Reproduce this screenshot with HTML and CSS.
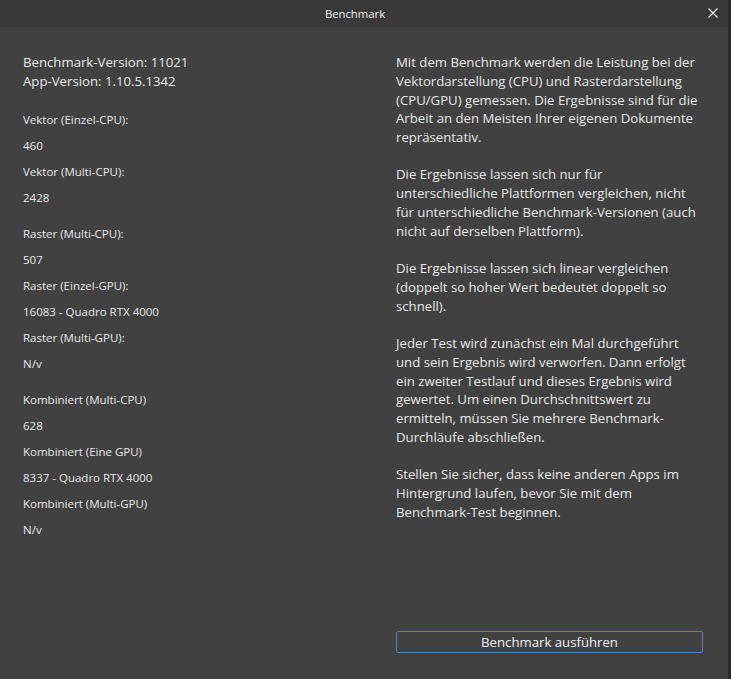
FILE: index.html
```html
<!DOCTYPE html>
<html lang="de">
<head>
<meta charset="utf-8">
<title>Benchmark</title>
<link rel="stylesheet" href="styles.css">
</head>
<body>
<div class="window">
  <header class="titlebar">
    <span class="title">Benchmark</span>
    <span class="close" aria-label="Schließen">
      <svg width="10" height="10" viewBox="0 0 10 10"><path d="M0.5 0.5 L9.5 9.5 M9.5 0.5 L0.5 9.5" stroke="#e6e6e6" stroke-width="1.2" fill="none"/></svg>
    </span>
  </header>
  <main class="content">
    <section class="left">
      <div class="versions">
        <div>Benchmark-Version: 11021</div>
        <div>App-Version: 1.10.5.1342</div>
      </div>
      <div class="group">
        <div class="row">Vektor (Einzel-CPU):</div>
        <div class="row">460</div>
        <div class="row">Vektor (Multi-CPU):</div>
        <div class="row">2428</div>
      </div>
      <div class="group">
        <div class="row">Raster (Multi-CPU):</div>
        <div class="row">507</div>
        <div class="row">Raster (Einzel-GPU):</div>
        <div class="row">16083 - Quadro RTX 4000</div>
        <div class="row">Raster (Multi-GPU):</div>
        <div class="row">N/v</div>
      </div>
      <div class="group">
        <div class="row">Kombiniert (Multi-CPU)</div>
        <div class="row">628</div>
        <div class="row">Kombiniert (Eine GPU)</div>
        <div class="row">8337 - Quadro RTX 4000</div>
        <div class="row">Kombiniert (Multi-GPU)</div>
        <div class="row">N/v</div>
      </div>
    </section>
    <section class="right">
      <div class="text">
        <p>Mit dem Benchmark werden die Leistung bei der Vektordarstellung (CPU) und Rasterdarstellung (CPU/GPU) gemessen. Die Ergebnisse sind für die Arbeit an den Meisten Ihrer eigenen Dokumente repräsentativ.</p>
        <p>Die Ergebnisse lassen sich nur für unterschiedliche Plattformen vergleichen, nicht für unterschiedliche Benchmark-Versionen (auch nicht auf derselben Plattform).</p>
        <p>Die Ergebnisse lassen sich linear vergleichen (doppelt so hoher Wert bedeutet doppelt so schnell).</p>
        <p>Jeder Test wird zunächst ein Mal durchgeführt und sein Ergebnis wird verworfen. Dann erfolgt ein zweiter Testlauf und dieses Ergebnis wird gewertet. Um einen Durchschnittswert zu ermitteln, müssen Sie mehrere Benchmark-Durchläufe abschließen.</p>
        <p>Stellen Sie sicher, dass keine anderen Apps im Hintergrund laufen, bevor Sie mit dem Benchmark-Test beginnen.</p>
      </div>
      <button class="run">Benchmark ausführen</button>
    </section>
  </main>
</div>
</body>
</html>
```

FILE: styles.css
```css
html, body {
  margin: 0;
  padding: 0;
  height: 100%;
  background: #2b2b2b;
}
body {
  font-family: "Open Sans", "Noto Sans", sans-serif;
  color: #e8e8e8;
}
.window {
  width: 728px;
  height: 679px;
  background: #414141;
  display: flex;
  flex-direction: column;
}
.titlebar {
  height: 27px;
  flex: none;
  background: #393939;
  display: flex;
  align-items: center;
  justify-content: center;
  padding-right: 18px;
  position: relative;
}
.title {
  font-size: 11.3px;
  color: #f0f0f0;
}
.close {
  position: absolute;
  right: 10px;
  top: 8px;
  width: 10px;
  height: 10px;
  display: flex;
}
.content {
  flex: 1;
  display: flex;
  padding: 26px 25px 25px 23px;
}
.left {
  width: 373px;
  flex: none;
}
.versions {
  font-size: 13.2px;
  line-height: 19px;
  margin-bottom: 15px;
}
.group + .group {
  margin-top: 10px;
}
.row {
  font-size: 11.5px;
  line-height: 26px;
  padding-top: 1px;
  height: 26px;
  box-sizing: border-box;
}
.right {
  flex: 1;
  display: flex;
  flex-direction: column;
}
.text {
  flex: 1;
  font-size: 13.2px;
  line-height: 18.8px;
}
.text p {
  margin: 0 0 18.5px 0;
}
.run {
  height: 22px;
  width: 307px;
  box-sizing: border-box;
  background: #414141;
  border: 1px solid #5b7fb8;
  border-radius: 2px;
  color: #f0f0f0;
  font-family: "Open Sans", "Noto Sans", sans-serif;
  font-size: 13.2px;
  padding: 0;
  margin-top: auto;
  margin-bottom: 1px;
}
```
